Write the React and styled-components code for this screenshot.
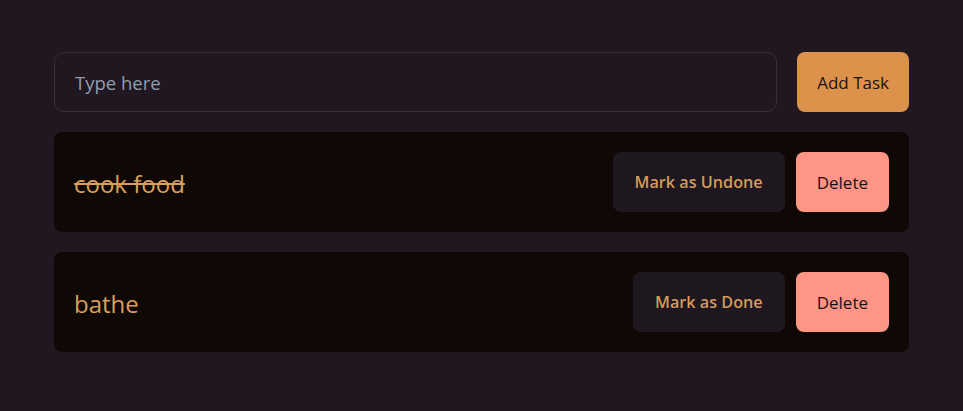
import styled, { createGlobalStyle } from "styled-components";

const GlobalStyle = createGlobalStyle`
    body {
        margin: 0;
        background: #201721;
        font-family: "Open Sans", "Noto Sans", sans-serif;
    }
`;

const Page = styled.div`
    padding: 52px 54px;
    display: flex;
    flex-direction: column;
    gap: 20px;
`;

const Form = styled.div`
    display: flex;
    gap: 20px;
`;

const Input = styled.input`
    flex: 1;
    height: 60px;
    box-sizing: border-box;
    padding: 0 20px;
    background: transparent;
    border: 1px solid #3a3030;
    border-radius: 10px;
    color: #dc924a;
    font-family: inherit;
    font-size: 18.5px;
    outline: none;

    &::placeholder {
        color: #8f9db0;
    }
`;

const Button = styled.button`
    height: 60px;
    padding: 0 21px;
    border: none;
    border-radius: 8px;
    font-family: inherit;
    font-size: 17px;
    cursor: pointer;
`;

const AddButton = styled(Button)`
    background: #dc924a;
    color: #1a1214;
    padding: 0 20px;
`;

const Card = styled.div`
    display: flex;
    align-items: center;
    justify-content: space-between;
    height: 100px;
    box-sizing: border-box;
    padding: 0 20px;
    background: #0f0805;
    border-radius: 8px;
`;

const TaskText = styled.span`
    color: #d9a05c;
    font-size: 24px;
    padding-top: 2px;
    text-decoration: ${(p) => (p.$done ? "line-through" : "none")};
`;

const Actions = styled.div`
    display: flex;
    gap: 11px;
`;

const ToggleButton = styled(Button)`
    background: #1f1720;
    color: #d29b5a;
    font-size: 16.2px;
    font-weight: 600;
    padding: 0 22px;
`;

const DeleteButton = styled(Button)`
    background: #ff9585;
    color: #1a1214;
`;

const tasks = [
    { id: 1, text: "cook food", done: true },
    { id: 2, text: "bathe", done: false },
];

const App = () => {
    return (
        <>
            <GlobalStyle />
            <Page>
                <Form>
                    <Input placeholder="Type here" />
                    <AddButton>Add Task</AddButton>
                </Form>
                {tasks.map((task) => (
                    <Card key={task.id}>
                        <TaskText $done={task.done}>{task.text}</TaskText>
                        <Actions>
                            <ToggleButton>
                                {task.done ? "Mark as Undone" : "Mark as Done"}
                            </ToggleButton>
                            <DeleteButton>Delete</DeleteButton>
                        </Actions>
                    </Card>
                ))}
            </Page>
        </>
    );
};

export default App;
